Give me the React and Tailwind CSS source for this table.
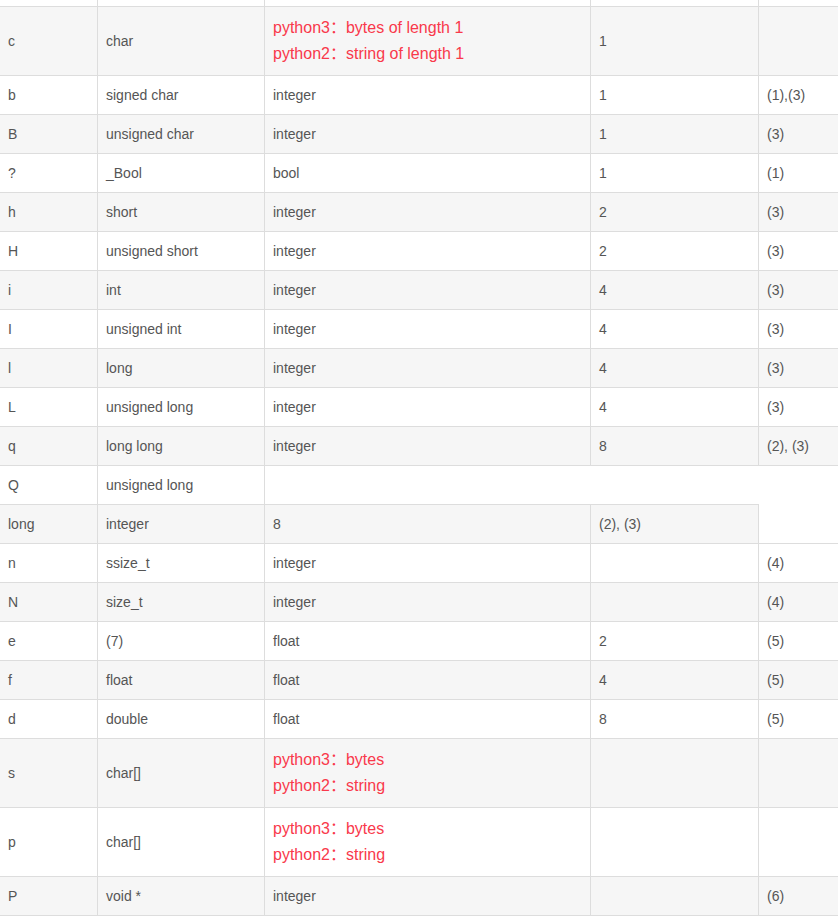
import React from "react";

const rows = [
  ["c", "char", ["python3：bytes of length 1", "python2：string of length 1"], "1", ""],
  ["b", "signed char", "integer", "1", "(1),(3)"],
  ["B", "unsigned char", "integer", "1", "(3)"],
  ["?", "_Bool", "bool", "1", "(1)"],
  ["h", "short", "integer", "2", "(3)"],
  ["H", "unsigned short", "integer", "2", "(3)"],
  ["i", "int", "integer", "4", "(3)"],
  ["I", "unsigned int", "integer", "4", "(3)"],
  ["l", "long", "integer", "4", "(3)"],
  ["L", "unsigned long", "integer", "4", "(3)"],
  ["q", "long long", "integer", "8", "(2), (3)"],
  ["Q", "unsigned long"],
  ["long", "integer", "8", "(2), (3)"],
  ["n", "ssize_t", "integer", "", "(4)"],
  ["N", "size_t", "integer", "", "(4)"],
  ["e", "(7)", "float", "2", "(5)"],
  ["f", "float", "float", "4", "(5)"],
  ["d", "double", "float", "8", "(5)"],
  ["s", "char[]", ["python3：bytes", "python2：string"], "", ""],
  ["p", "char[]", ["python3：bytes", "python2：string"], "", ""],
  ["P", "void *", "integer", "", "(6)"],
];

const Cell = ({ value }) => {
  if (Array.isArray(value)) {
    return (
      <td className="border border-[#dddddd] px-2 py-2 align-middle">
        {value.map((line) => (
          <div key={line} className="text-[16px] leading-[26px] text-[#f9394b]">
            {line}
          </div>
        ))}
      </td>
    );
  }
  return (
    <td className="border border-[#dddddd] px-2 py-2 align-middle leading-[22px]">
      {value}
    </td>
  );
};

export default function App() {
  return (
    <div className="w-[838px] h-[918px] overflow-hidden bg-white">
      <table
        className="table-fixed border-collapse -ml-px w-[919px] text-[14px] text-[#555555]"
        style={{ fontFamily: '"Liberation Sans", Arial, "Noto Sans CJK SC", sans-serif' }}
      >
        <colgroup>
          <col className="w-[98px]" />
          <col className="w-[167px]" />
          <col className="w-[326px]" />
          <col className="w-[168px]" />
          <col className="w-[160px]" />
        </colgroup>
        <tbody>
          {/* tail of the row above, cut off by the screenshot */}
          <tr className="bg-white">
            {[0, 1, 2, 3, 4].map((i) => (
              <td key={i} className="h-[6px] p-0 border-x border-b border-[#dddddd]"></td>
            ))}
          </tr>
          {rows.map((row, i) => (
            <tr key={i} className={i % 2 === 0 ? "bg-[#f6f6f6]" : "bg-white"}>
              {row.map((value, j) => (
                <Cell key={j} value={value} />
              ))}
            </tr>
          ))}
        </tbody>
      </table>
    </div>
  );
}
